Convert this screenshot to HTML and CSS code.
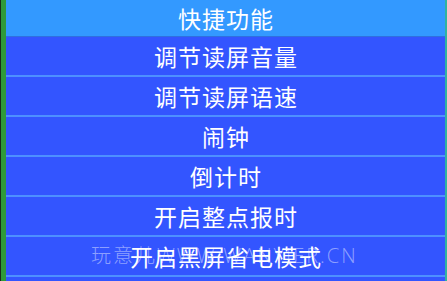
FILE: index.html
```html
<!DOCTYPE html>
<html lang="zh-CN">

<head>
    <meta charset="UTF-8">
    <meta name="viewport" content="width=device-width, initial-scale=1.0">
    <title>快捷功能</title>
    <link rel="stylesheet" href="styles.css">
</head>

<body>
    <div class="screen">
        <div class="side-bar"></div>
        <div class="menu">
            <div class="menu-title">快捷功能</div>
            <div class="menu-item">调节读屏音量</div>
            <div class="menu-item">调节读屏语速</div>
            <div class="menu-item">闹钟</div>
            <div class="menu-item">倒计时</div>
            <div class="menu-item">开启整点报时</div>
            <div class="menu-item">开启黑屏省电模式</div>
            <div class="menu-rest"></div>
        </div>
        <div class="edge"></div>
        <p class="watermark">玩意儿WWW.WANYIER.CN</p>
    </div>
</body>

</html>
```

FILE: styles.css
```css
* {
    margin: 0px;
    padding: 0px;
    box-sizing: border-box;
}

body {
    width: 447px;
    height: 281px;
    overflow: hidden;
    background-color: #3355ff;
    font-family: "Noto Sans CJK SC", "Noto Sans", sans-serif;
}

.screen {
    position: relative;
    display: flex;
    height: 281px;
    overflow: hidden;
}

.side-bar {
    width: 6px;
    flex-shrink: 0;
    background-color: #2f9a3a;
    border-left: 1px solid #1b2a1b;
}

.menu {
    position: relative;
    z-index: 1;
    flex: 1;
    display: flex;
    flex-direction: column;
}

.edge {
    width: 2px;
    flex-shrink: 0;
    background-color: #2fb3a0;
}

.menu-title {
    height: 37px;
    flex-shrink: 0;
    line-height: 36px;
    text-align: center;
    color: white;
    font-size: 23px;
    letter-spacing: 1px;
    text-indent: 1px;
    background-color: #3399ff;
    border-bottom: 1px solid #2f6fe0;
}

.menu-item {
    height: 40px;
    flex-shrink: 0;
    line-height: 38px;
    text-align: center;
    color: white;
    font-size: 23px;
    letter-spacing: 1px;
    text-indent: 1px;
    border-bottom: 2px solid #4d90ff;
}

.menu-rest {
    flex: 1;
}

.watermark {
    position: absolute;
    left: 91px;
    top: 241px;
    z-index: 0;
    font-family: "Open Sans", "Noto Sans CJK SC", sans-serif;
    font-weight: 300;
    font-size: 20px;
    letter-spacing: 2px;
    line-height: 30px;
    color: rgba(255, 255, 255, 0.45);
}
```
